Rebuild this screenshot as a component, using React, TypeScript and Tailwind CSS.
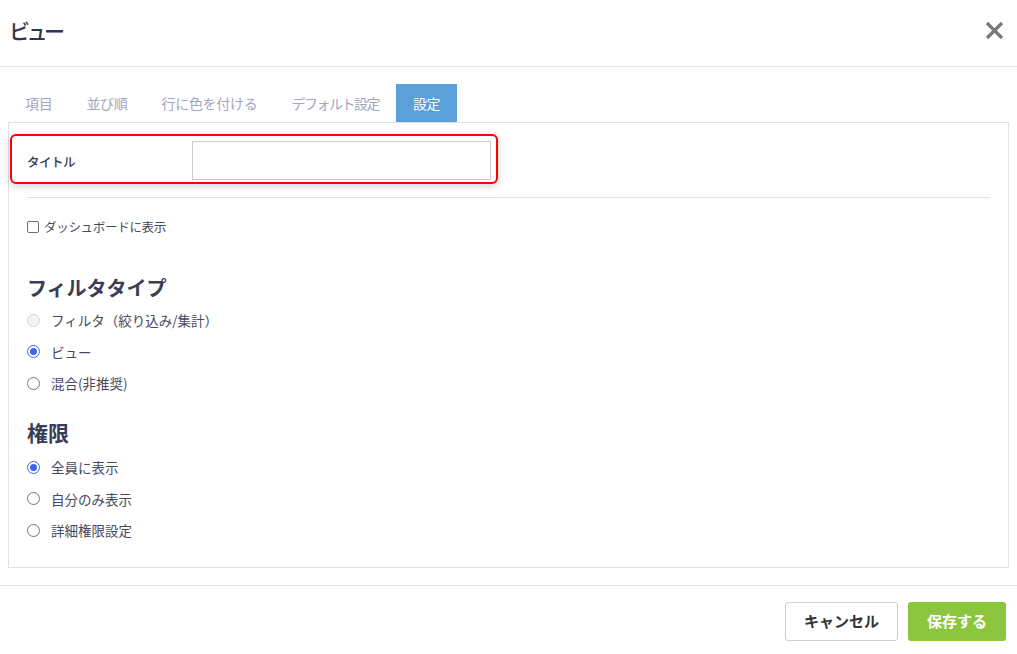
const tabs = ["項目", "並び順", "行に色を付ける", "デフォルト設定", "設定"];

const filterTypes = [
  { label: "フィルタ（絞り込み/集計）", checked: false, disabled: true },
  { label: "ビュー", checked: true, disabled: false },
  { label: "混合(非推奨)", checked: false, disabled: false },
];

const permissions = [
  { label: "全員に表示", checked: true },
  { label: "自分のみ表示", checked: false },
  { label: "詳細権限設定", checked: false },
];

const Radio = ({ checked, disabled }: { checked: boolean; disabled?: boolean }) => (
  <span
    className={`flex h-[13px] w-[13px] shrink-0 items-center justify-center rounded-full border ${
      checked ? "border-[#3f63f0]" : disabled ? "border-[#d3d3d3] bg-[#f3f3f3]" : "border-[#757575]"
    }`}
  >
    {checked && <span className="h-[7px] w-[7px] rounded-full bg-[#3f63f0]" />}
  </span>
);

const App = () => {
  return (
    <div
      className="flex h-[654px] w-[1017px] flex-col bg-white text-[#474a5e]"
      style={{ fontFamily: '"Noto Sans CJK JP", "Noto Sans", sans-serif' }}
    >
      {/* header */}
      <div className="flex h-[67px] shrink-0 items-center justify-between border-b border-[#e6e6ef] pl-[9px] pr-[13px]">
        <h1 className="mb-[5px] text-[21px] font-medium leading-none tracking-[-3.5px] text-[#313650]">ビュー</h1>
        <svg width="19" height="19" viewBox="0 0 19 19" className="mb-[6px]">
          <path d="M2 2 L17 17 M17 2 L2 17" stroke="#7a7a7a" strokeWidth="3.2" />
        </svg>
      </div>

      {/* tabs */}
      <div className="ml-[8px] mt-[17px] flex h-[38px] items-stretch">
        {tabs.map((t, i) => (
          <div
            key={t}
            className={`flex items-center px-[17px] text-[14px] ${
              i === 3 ? "tracking-[-1.5px]" : "tracking-[-0.3px]"
            } ${i === tabs.length - 1 ? "bg-[#5ba0d9] text-white" : "text-[#a3a6c0]"}`}
          >
            {t}
          </div>
        ))}
      </div>

      {/* panel */}
      <div className="mx-[8px] h-[446px] border border-[#e0e0ea]">
        <div className="ml-[1px] mt-[11px] flex h-[50px] w-[488px] items-center rounded-[6px] border-2 border-[#f00] pl-[15px] pt-[3px] shadow-[0_2px_8px_rgba(0,0,0,0.18)]">
          <span className="w-[165px] pt-[3px] text-[12.5px] font-medium tracking-[-0.5px] text-[#34384e]">タイトル</span>
          <div className="h-[39px] w-[299px] border border-[#cccccc] bg-white" />
        </div>

        <div className="mx-[18px] mt-[13px] border-t border-[#e2e2e8]" />

        <label className="ml-[18px] mt-[20px] flex items-center gap-[5px] text-[12.5px] tracking-[-0.3px]">
          <span className="h-[12px] w-[12px] rounded-[2px] border border-[#6e6e6e]" />
          <span>ダッシュボードに表示</span>
        </label>

        <h2 className="ml-[18px] mt-[41px] text-[20px] font-bold leading-none text-[#393d56]">フィルタタイプ</h2>
        <div className="ml-[18px] mt-[13px] flex flex-col gap-[12.5px]">
          {filterTypes.map((f) => (
            <div key={f.label} className="flex h-[19px] items-center gap-[11px] text-[13.5px]">
              <Radio checked={f.checked} disabled={f.disabled} />
              <span>{f.label}</span>
            </div>
          ))}
        </div>

        <h2 className="ml-[18px] mt-[29px] text-[21px] font-bold leading-none text-[#393d56]">権限</h2>
        <div className="ml-[18px] mt-[15px] flex flex-col gap-[12.5px]">
          {permissions.map((p) => (
            <div key={p.label} className="flex h-[19px] items-center gap-[11px] text-[13.5px]">
              <Radio checked={p.checked} />
              <span>{p.label}</span>
            </div>
          ))}
        </div>
      </div>

      {/* footer */}
      <div className="mt-[17px] flex justify-end gap-[10px] border-t border-[#e6e6ef] pr-[11px] pt-[16px]">
        <button className="h-[39px] w-[113px] rounded-[3px] border border-[#cfcfcf] bg-white text-[15px] font-bold text-[#333]">
          キャンセル
        </button>
        <button className="h-[39px] w-[98px] rounded-[3px] bg-[#8cc63f] text-[15px] font-bold text-white">
          保存する
        </button>
      </div>
    </div>
  );
};

export default App;
